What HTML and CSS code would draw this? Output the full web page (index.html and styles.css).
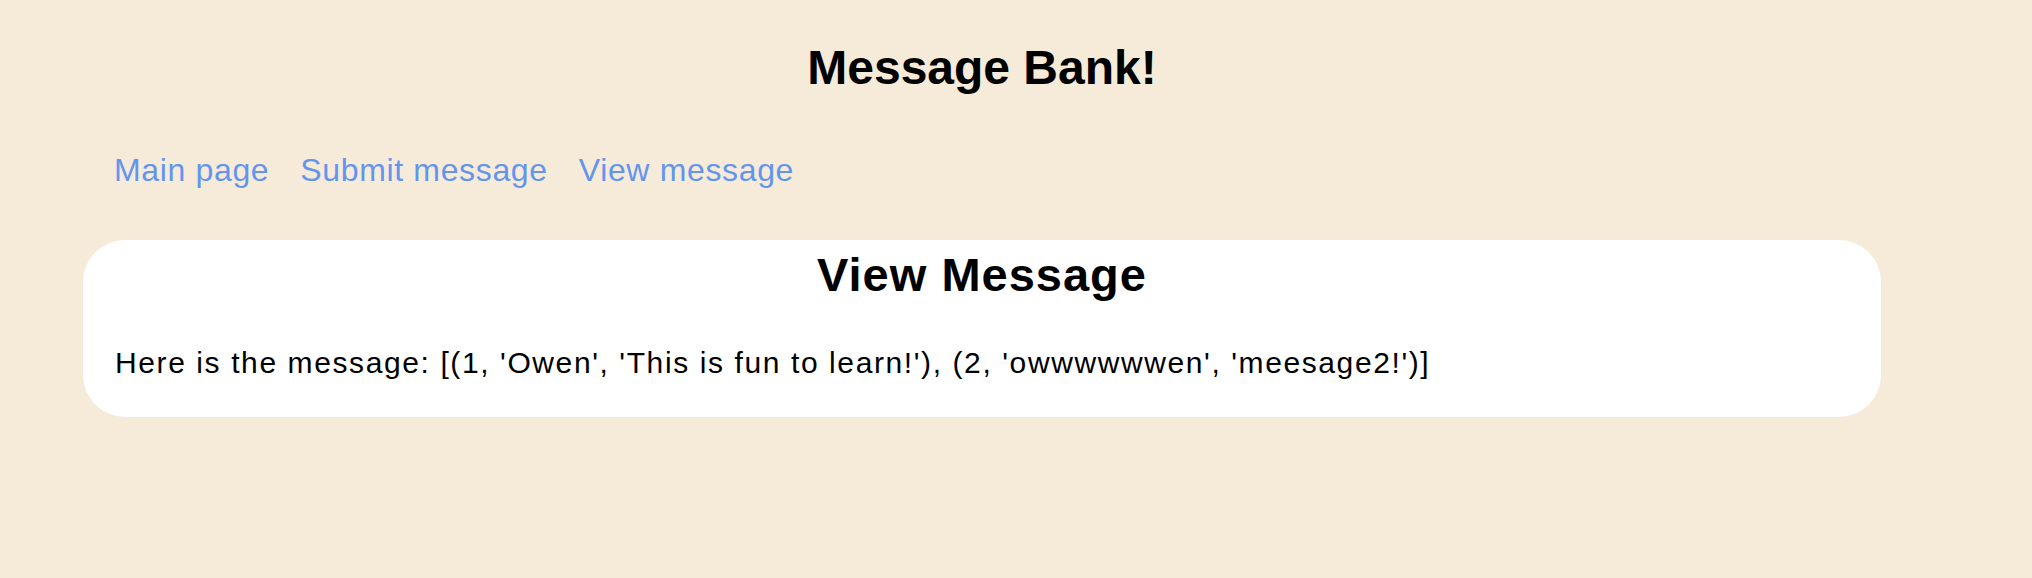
FILE: index.html
```html
<!DOCTYPE html>
<html lang="en">
<head>
<meta charset="utf-8">
<title>Message Bank!</title>
<link rel="stylesheet" href="styles.css">
</head>
<body>
<div class="page">
  <h1 class="site-title">Message Bank!</h1>
  <nav class="nav">
    <a href="#" class="nav-link">Main page</a>
    <a href="#" class="nav-link">Submit message</a>
    <a href="#" class="nav-link">View message</a>
  </nav>
  <section class="card">
    <h2 class="card-title">View Message</h2>
    <p class="card-text">Here is the message: [(1, 'Owen', 'This is fun to learn!'), (2, 'owwwwwwen', 'meesage2!')]</p>
  </section>
</div>
</body>
</html>
```

FILE: styles.css
```css
html, body {
  margin: 0;
  padding: 0;
  background: #f6ebd9;
}
body {
  font-family: "Liberation Sans", Arial, sans-serif;
  color: #000;
}
.page {
  width: 1798px;
  padding-left: 83px;
  padding-top: 40px;
}
.site-title {
  margin: 0;
  font-size: 48px;
  font-weight: bold;
  text-align: center;
  line-height: 55px;
}
.nav {
  display: flex;
  gap: 31px;
  padding-left: 31px;
  margin-top: 57px;
}
.nav-link {
  color: #6495ed;
  text-decoration: none;
  font-size: 32px;
  line-height: 37px;
  letter-spacing: 0.65px;
}
.card {
  margin-top: 51px;
  background: #fff;
  border-radius: 42px;
  padding: 8px 32px 37px;
}
.card-title {
  margin: 0;
  font-size: 47px;
  font-weight: bold;
  text-align: center;
  line-height: 53px;
  letter-spacing: 1px;
}
.card-text {
  margin: 44px 0 0;
  font-size: 30px;
  line-height: 35px;
  letter-spacing: 1.6px;
}
```
